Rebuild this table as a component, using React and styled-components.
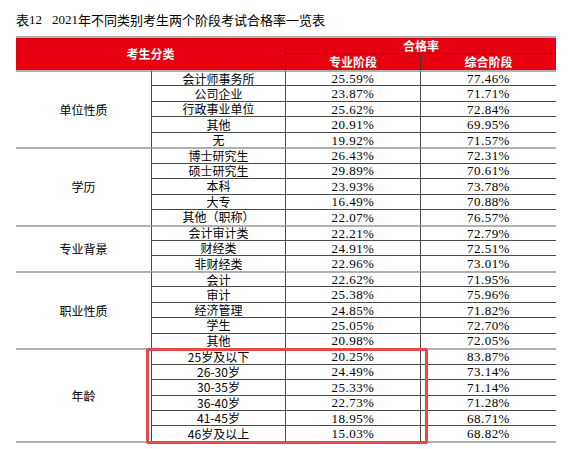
import React from "react";
import styled, { createGlobalStyle } from "styled-components";

const Global = createGlobalStyle`
  html, body { margin: 0; padding: 0; background: #fff; }
  body { font-family: "Noto Sans CJK SC", sans-serif; color: #000; }
`;

const Page = styled.div`
  width: 581px;
  height: 449px;
  box-sizing: border-box;
  padding: 12px 0 0 16px;
  overflow: hidden;
`;

const Title = styled.div`
  font-family: "Liberation Serif", "Noto Sans CJK SC", serif;
  font-size: 13px;
  line-height: 16px;
  height: 16px;
  margin-bottom: 8px;
  display: flex;
  align-items: center;
  white-space: pre;
`;

const Gap = styled.span`
  display: inline-block;
  width: 10px;
`;

const Han = styled.span`
  font-family: "Noto Sans CJK SC", sans-serif;
`;

const Wrap = styled.div`
  position: relative;
  width: 540px;
`;

const Grid = styled.div`
  display: grid;
  grid-template-columns: 136px 134px 135px 135px;
  grid-template-rows: 16px 16px repeat(24, 15.46px);
  border-top: 2px solid #b0b0b0;
  border-bottom: 2px solid #b0b0b0;
  width: 540px;
`;

const HeadCell = styled.div`
  background: #e60012;
  color: #fff;
  font-weight: 700;
  font-size: 12px;
  display: flex;
  align-items: center;
  justify-content: center;
  box-sizing: border-box;
  grid-column: span ${(p) => p.$cols || 1};
  grid-row: span ${(p) => p.$rows || 1};
  border-right: ${(p) => (p.$right ? "1px solid #3a3a3a" : "none")};
  border-bottom: ${(p) => (p.$bottom ? "1px solid #3a3a3a" : "none")};
  line-height: 1;
`;

const GroupCell = styled.div`
  grid-row: span ${(p) => p.$rows};
  border-top: 2px solid #b0b0b0;
  border-right: 1px solid #4a4a4a;
  display: flex;
  align-items: center;
  justify-content: center;
  font-size: 12px;
  box-sizing: border-box;
`;

const Cell = styled.div`
  box-sizing: border-box;
  border-top: ${(p) => (p.$first ? "2px solid #b0b0b0" : "1px solid #4a4a4a")};
  border-right: ${(p) => (p.$last ? "none" : "1px solid #4a4a4a")};
  display: flex;
  align-items: center;
  justify-content: center;
  font-size: 12px;
  line-height: 1;
  white-space: nowrap;
`;

const Num = styled(Cell)`
  font-family: "Liberation Serif", serif;
  font-size: 13px;
  letter-spacing: 0.45px;
`;

const Highlight = styled.div`
  position: absolute;
  left: 130px;
  top: 312px;
  width: 282px;
  height: 96px;
  box-sizing: border-box;
  border: 3.5px solid #e8474b;
  border-radius: 2px;
  pointer-events: none;
`;

const groups = [
  {
    name: "单位性质",
    rows: [
      ["会计师事务所", "25.59%", "77.46%"],
      ["公司企业", "23.87%", "71.71%"],
      ["行政事业单位", "25.62%", "72.84%"],
      ["其他", "20.91%", "69.95%"],
      ["无", "19.92%", "71.57%"],
    ],
  },
  {
    name: "学历",
    rows: [
      ["博士研究生", "26.43%", "72.31%"],
      ["硕士研究生", "29.89%", "70.61%"],
      ["本科", "23.93%", "73.78%"],
      ["大专", "16.49%", "70.88%"],
      ["其他（职称）", "22.07%", "76.57%"],
    ],
  },
  {
    name: "专业背景",
    rows: [
      ["会计审计类", "22.21%", "72.79%"],
      ["财经类", "24.91%", "72.51%"],
      ["非财经类", "22.96%", "73.01%"],
    ],
  },
  {
    name: "职业性质",
    rows: [
      ["会计", "22.62%", "71.95%"],
      ["审计", "25.38%", "75.96%"],
      ["经济管理", "24.85%", "71.82%"],
      ["学生", "25.05%", "72.70%"],
      ["其他", "20.98%", "72.05%"],
    ],
  },
  {
    name: "年龄",
    rows: [
      ["25岁及以下", "20.25%", "83.87%"],
      ["26-30岁", "24.49%", "73.14%"],
      ["30-35岁", "25.33%", "71.14%"],
      ["36-40岁", "22.73%", "71.28%"],
      ["41-45岁", "18.95%", "68.71%"],
      ["46岁及以上", "15.03%", "68.82%"],
    ],
  },
];

export default function App() {
  return (
    <>
      <Global />
      <Page>
        <Title>
          <Han>表</Han>12<Gap />2021<Han>年不同类别考生两个阶段考试合格率一览表</Han>
        </Title>
        <Wrap>
          <Grid>
            <HeadCell $cols={2} $rows={2} $right>考生分类</HeadCell>
            <HeadCell $cols={2} $bottom>合格率</HeadCell>
            <HeadCell $right>专业阶段</HeadCell>
            <HeadCell>综合阶段</HeadCell>
            {groups.map((g) => (
              <React.Fragment key={g.name}>
                <GroupCell $rows={g.rows.length}>{g.name}</GroupCell>
                {g.rows.map((r, i) => (
                  <React.Fragment key={r[0]}>
                    <Cell $first={i === 0}>{r[0]}</Cell>
                    <Num $first={i === 0}>{r[1]}</Num>
                    <Num $first={i === 0} $last>{r[2]}</Num>
                  </React.Fragment>
                ))}
              </React.Fragment>
            ))}
          </Grid>
          <Highlight />
        </Wrap>
      </Page>
    </>
  );
}
